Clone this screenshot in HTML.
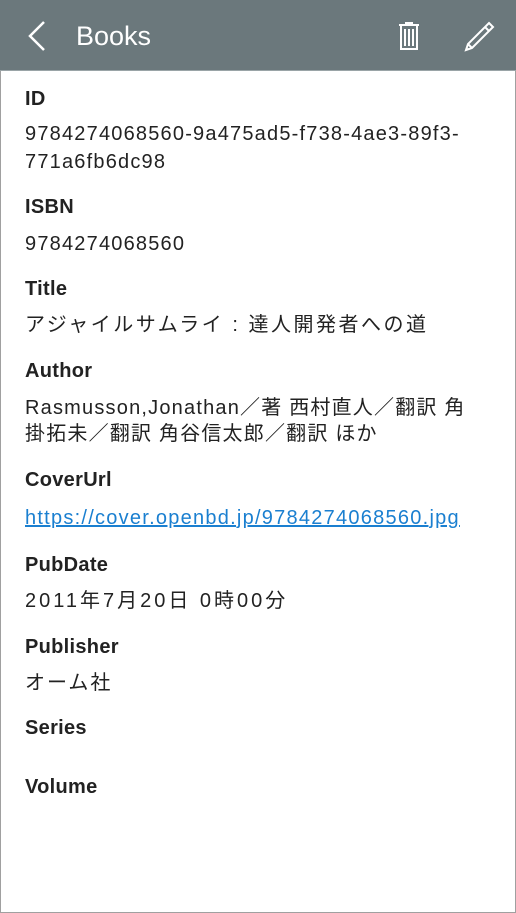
<!DOCTYPE html>
<html><head><meta charset="utf-8"><style>
html,body{margin:0;padding:0;background:#fff;}
body{width:516px;height:913px;position:relative;overflow:hidden;font-family:"Liberation Sans","Noto Sans CJK JP",sans-serif;color:#222;}
.frame{position:absolute;left:0;top:0;width:514px;height:911px;border:1px solid #a0a0a0;}
.hdr{position:absolute;left:0;top:0;width:516px;height:70px;background:#6b787c;border-bottom:1px solid #9aa4a7;}
.hdr .t{position:absolute;left:76px;top:18px;font-size:27px;color:#fff;line-height:36px;}
.t2{position:absolute;left:25px;font-size:20px;line-height:28px;white-space:nowrap;letter-spacing:1.2px;}
.l{font-weight:bold;letter-spacing:0.3px;}
a{color:#1a7fd0;text-decoration:underline;}
</style></head><body>
<div class="frame"></div>
<div class="hdr">
<svg style="position:absolute;left:26px;top:20px" width="22" height="32" viewBox="0 0 22 32"><path d="M18 2 L4 16 L18 30" fill="none" stroke="#fff" stroke-width="2.5"/></svg>
<div class="t">Books</div>
<svg style="position:absolute;left:397px;top:20px" width="24" height="30" viewBox="0 0 24 30"><path d="M8 3h8M2 5h20M4 5v24h16V5M8 9v17M12 9v17M16 9v17" fill="none" stroke="#fff" stroke-width="2"/></svg>
<svg style="position:absolute;left:463px;top:20px" width="32" height="32" viewBox="0 0 32 32"><path d="M26 3 L30 7 L9 28 L3 30 L5 24 Z M22 7 L26 11 M5 24 L9 28" fill="none" stroke="#fff" stroke-width="2"/></svg>
</div>
<div class="t2 l" style="top:85px">ID</div>
<div class="t2" style="top:120px">9784274068560-9a475ad5-f738-4ae3-89f3-<br>771a6fb6dc98</div>
<div class="t2 l" style="top:193px">ISBN</div>
<div class="t2" style="top:230px">9784274068560</div>
<div class="t2 l" style="top:275px">Title</div>
<div class="t2" style="top:311px;letter-spacing:2.5px">アジャイルサムライ : 達人開発者への道</div>
<div class="t2 l" style="top:357px">Author</div>
<div class="t2" style="top:395px;line-height:26px;letter-spacing:1.2px">Rasmusson,Jonathan／著 西村直人／翻訳 角<br>掛拓未／翻訳 角谷信太郎／翻訳 ほか</div>
<div class="t2 l" style="top:466px">CoverUrl</div>
<div class="t2" style="top:504px;letter-spacing:1.25px"><a>https://cover.openbd.jp/9784274068560.jpg</a></div>
<div class="t2 l" style="top:551px">PubDate</div>
<div class="t2" style="top:587px;letter-spacing:3px">2011年7月20日 0時00分</div>
<div class="t2 l" style="top:633px">Publisher</div>
<div class="t2" style="top:669px;letter-spacing:2px">オーム社</div>
<div class="t2 l" style="top:714px">Series</div>
<div class="t2 l" style="top:773px">Volume</div>
</body></html>
